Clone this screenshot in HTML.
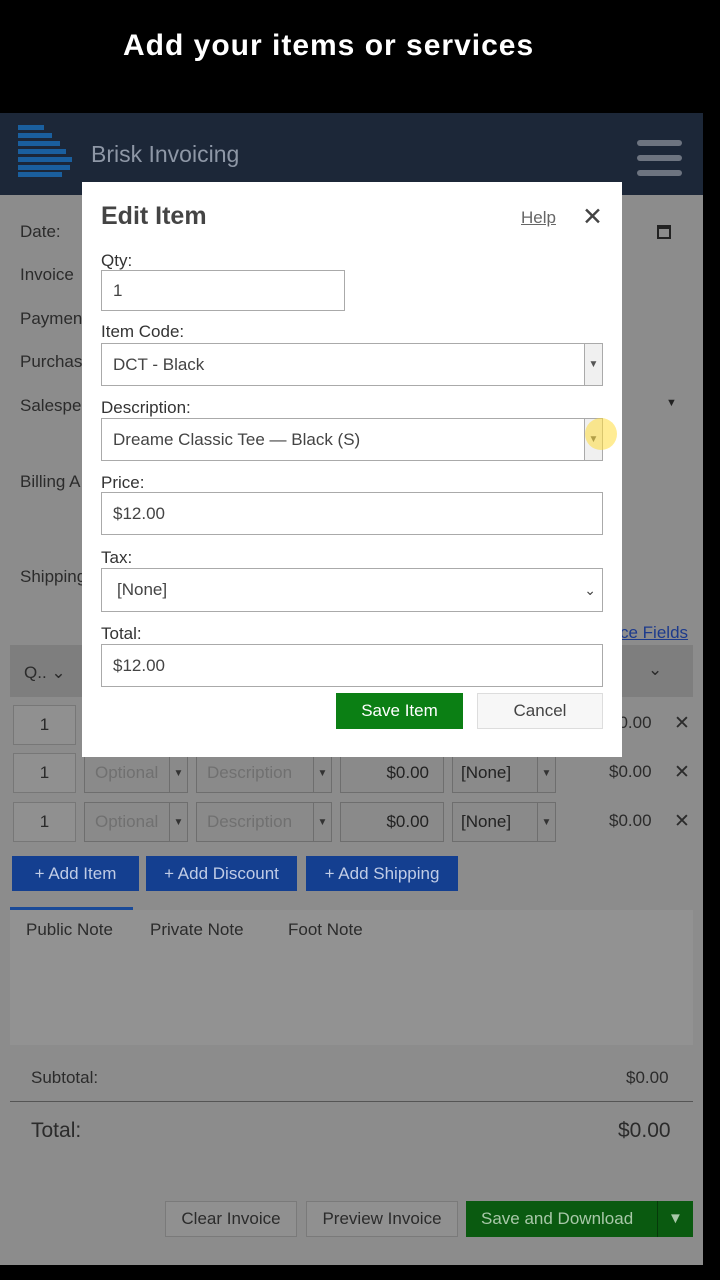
<!DOCTYPE html>
<html><head><meta charset="utf-8"><style>
*{box-sizing:border-box;margin:0;padding:0}
body{width:720px;height:1280px;background:#000;font-family:"Liberation Sans",sans-serif;position:relative;overflow:hidden}
.a{position:absolute}
.t{color:#fff;font-weight:bold;font-size:30px;left:123px;top:29px;letter-spacing:1px}
.page{left:0;top:113px;width:703px;height:1152px;background:#8c8c8c}
.hdr{left:0;top:113px;width:703px;height:82px;background:#1c2738}
.lbl{color:#2b2b2b;font-size:17px}
.inp{border:1px solid #777;background:#909090;color:#2a2a2a;font-size:17px}
.btnb{background:#143f90;color:#c0cce6;font-size:17px;text-align:center;line-height:35px;height:35px}
.modal{left:82px;top:182px;width:540px;height:575px;background:#fff}
.m{color:#333;font-size:17px}
.box{border:1px solid #aaa;background:#fff;color:#444;font-size:17px;padding-left:11px;display:flex;align-items:center}
.dd{position:absolute;right:0;top:0;bottom:0;width:18px;border-left:1px solid #aaa;background:#f0f0f0;font-size:10px;color:#555;text-align:center;display:flex;align-items:center;justify-content:center}
.rb{background:#8a8a8a;border:1px solid #6e6e6e;height:40px;font-size:17px}
.rd{position:absolute;right:0;top:0;bottom:0;width:18px;border-left:1px solid #6e6e6e;font-size:10px;color:#333;display:flex;align-items:center;justify-content:center}
</style></head><body>
<div class="a t">Add your items or services</div>
<div class="a page"></div>
<div class="a hdr"></div>
<svg class="a" style="left:18px;top:125px" width="56" height="55"><g fill="#1a5f9e"><rect x="0" y="0" width="26" height="5"/><rect x="0" y="8" width="34" height="5"/><rect x="0" y="16" width="42" height="5"/><rect x="0" y="24" width="48" height="5"/><rect x="0" y="32" width="54" height="5"/><rect x="0" y="40" width="52" height="5"/><rect x="0" y="47" width="44" height="5"/></g></svg>
<div class="a" style="left:91px;top:141px;color:#8e97a6;font-size:23px">Brisk Invoicing</div>
<div class="a" style="left:637px;top:140px;width:45px;height:6px;background:#6d7480;border-radius:3px"></div>
<div class="a" style="left:637px;top:155px;width:45px;height:6px;background:#6d7480;border-radius:3px"></div>
<div class="a" style="left:637px;top:170px;width:45px;height:6px;background:#6d7480;border-radius:3px"></div>
<div class="a lbl" style="left:20px;top:222px">Date:</div>
<div class="a lbl" style="left:20px;top:265px">Invoice</div>
<div class="a lbl" style="left:20px;top:309px">Paymen</div>
<div class="a lbl" style="left:20px;top:352px">Purchas</div>
<div class="a lbl" style="left:20px;top:396px">Salesper</div>
<div class="a lbl" style="left:20px;top:472px">Billing A</div>
<div class="a lbl" style="left:20px;top:567px">Shipping</div>
<div class="a" style="left:657px;top:225px;width:14px;height:14px;border:2px solid #222;border-top-width:4px"></div>
<div class="a" style="left:666px;top:397px;font-size:11px;color:#222">▼</div>
<div class="a" style="left:620px;top:623px;color:#1c3a8c;font-size:17px;text-decoration:underline">ce Fields</div>
<div class="a" style="left:10px;top:645px;width:683px;height:52px;background:#7e7e7e"></div>
<div class="a lbl" style="left:24px;top:663px">Q.. ⌄</div>
<div class="a lbl" style="left:648px;top:660px">⌄</div>
<div class="a inp" style="left:13px;top:705px;width:63px;height:40px;text-align:center;line-height:38px">1</div>
<div class="a lbl" style="left:609px;top:713px">$0.00</div>
<div class="a lbl" style="left:674px;top:712px;font-size:19px">✕</div>
<div class="a inp" style="left:13px;top:753px;width:63px;height:40px;text-align:center;line-height:38px">1</div>
<div class="a inp" style="left:13px;top:802px;width:63px;height:40px;text-align:center;line-height:38px">1</div>
<div class="a rb" style="left:84px;top:753px;width:104px;color:#707070;padding:9px 10px">Optional<div class="rd">▼</div></div>
<div class="a rb" style="left:196px;top:753px;width:136px;color:#707070;padding:9px 10px">Description<div class="rd">▼</div></div>
<div class="a rb" style="left:340px;top:753px;width:104px;color:#222;padding:9px 14px;text-align:right">$0.00</div>
<div class="a rb" style="left:452px;top:753px;width:104px;color:#222;padding:9px 8px">[None]<div class="rd">▼</div></div>
<div class="a rb" style="left:84px;top:802px;width:104px;color:#707070;padding:9px 10px">Optional<div class="rd">▼</div></div>
<div class="a rb" style="left:196px;top:802px;width:136px;color:#707070;padding:9px 10px">Description<div class="rd">▼</div></div>
<div class="a rb" style="left:340px;top:802px;width:104px;color:#222;padding:9px 14px;text-align:right">$0.00</div>
<div class="a rb" style="left:452px;top:802px;width:104px;color:#222;padding:9px 8px">[None]<div class="rd">▼</div></div>
<div class="a lbl" style="left:609px;top:762px">$0.00</div><div class="a lbl" style="left:674px;top:761px;font-size:19px">✕</div>
<div class="a lbl" style="left:609px;top:811px">$0.00</div><div class="a lbl" style="left:674px;top:810px;font-size:19px">✕</div>
<div class="a btnb" style="left:12px;top:856px;width:127px">+ Add Item</div>
<div class="a btnb" style="left:146px;top:856px;width:151px">+ Add Discount</div>
<div class="a btnb" style="left:306px;top:856px;width:152px">+ Add Shipping</div>
<div class="a" style="left:10px;top:907px;width:123px;height:3px;background:#1a4a98"></div>
<div class="a" style="left:10px;top:910px;width:683px;height:135px;background:#929292"></div>
<div class="a lbl" style="left:26px;top:920px">Public Note</div>
<div class="a lbl" style="left:150px;top:920px">Private Note</div>
<div class="a lbl" style="left:288px;top:920px">Foot Note</div>
<div class="a lbl" style="left:31px;top:1068px">Subtotal:</div>
<div class="a lbl" style="left:626px;top:1068px">$0.00</div>
<div class="a" style="left:10px;top:1101px;width:683px;height:1px;background:#555"></div>
<div class="a lbl" style="left:31px;top:1119px;font-size:21px">Total:</div>
<div class="a lbl" style="left:618px;top:1119px;font-size:21px">$0.00</div>
<div class="a" style="left:165px;top:1201px;width:132px;height:36px;background:#909090;border:1px solid #7a7a7a;color:#2b2b2b;font-size:17px;text-align:center;line-height:34px">Clear Invoice</div>
<div class="a" style="left:306px;top:1201px;width:152px;height:36px;background:#909090;border:1px solid #7a7a7a;color:#2b2b2b;font-size:17px;text-align:center;line-height:34px">Preview Invoice</div>
<div class="a" style="left:466px;top:1201px;width:227px;height:36px;background:#0a5a10;color:#a8c8a8;font-size:17px;line-height:36px;padding-left:15px">Save and Download</div>
<div class="a" style="left:657px;top:1201px;width:1px;height:36px;background:#063a0a"></div>
<div class="a" style="left:668px;top:1201px;color:#a8c8a8;font-size:15px;line-height:36px">▼</div>

<div class="a modal"></div>
<div class="a" style="left:101px;top:202px;color:#444;font-weight:bold;font-size:25px">Edit Item</div>
<div class="a" style="left:521px;top:208px;color:#666;font-size:17px;text-decoration:underline">Help</div>
<div class="a" style="left:582px;top:202px;color:#444;font-size:25px">✕</div>
<div class="a m" style="left:101px;top:251px">Qty:</div>
<div class="a box" style="left:101px;top:270px;width:244px;height:41px">1</div>
<div class="a m" style="left:101px;top:322px">Item Code:</div>
<div class="a box" style="left:101px;top:343px;width:502px;height:43px">DCT - Black<div class="dd">▼</div></div>
<div class="a m" style="left:101px;top:398px">Description:</div>
<div class="a box" style="left:101px;top:418px;width:502px;height:43px">Dreame Classic Tee — Black (S)<div class="dd">▼</div></div>
<div class="a" style="left:585px;top:418px;width:32px;height:32px;border-radius:16px;background:rgba(255,220,60,.55)"></div>
<div class="a m" style="left:101px;top:473px">Price:</div>
<div class="a box" style="left:101px;top:492px;width:502px;height:43px">$12.00</div>
<div class="a m" style="left:101px;top:548px">Tax:</div>
<div class="a box" style="left:101px;top:568px;width:502px;height:44px;padding-left:15px">[None]<span style="position:absolute;right:6px;font-size:14px">⌄</span></div>
<div class="a m" style="left:101px;top:624px">Total:</div>
<div class="a box" style="left:101px;top:644px;width:502px;height:43px">$12.00</div>
<div class="a" style="left:336px;top:693px;width:127px;height:36px;background:#0b7f14;color:#fff;font-size:17px;text-align:center;line-height:36px">Save Item</div>
<div class="a" style="left:477px;top:693px;width:126px;height:36px;background:#f7f7f7;border:1px solid #ddd;color:#444;font-size:17px;text-align:center;line-height:34px">Cancel</div>
</body></html>
